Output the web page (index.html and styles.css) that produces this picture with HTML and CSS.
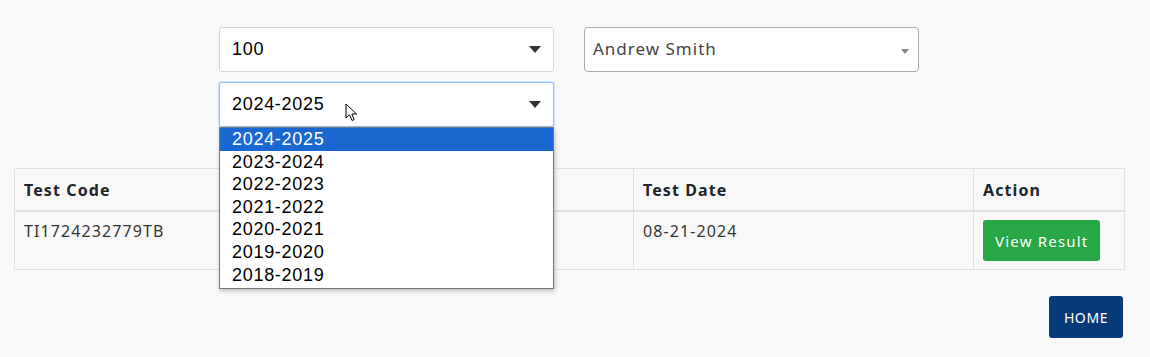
FILE: index.html
```html
<!DOCTYPE html>
<html>
<head>
  <title>Test Results</title>
  <link rel="stylesheet" href="styles.css">
</head>
<body>

  <div class="filters">
    <div class="filter-col">
      <div class="select-box">
        <span>100</span>
        <span class="caret"></span>
      </div>
      <div class="select-box focused">
        <span>2024-2025</span>
        <span class="caret"></span>
      </div>
    </div>
    <div class="filter-col">
      <div class="select2-box">
        <span>Andrew Smith</span>
        <span class="caret-small"></span>
      </div>
    </div>
  </div>

  <table class="results">
    <colgroup>
      <col style="width: 310px">
      <col style="width: 309px">
      <col style="width: 340px">
      <col style="width: 151px">
    </colgroup>
    <thead>
      <tr>
        <th>Test Code</th>
        <th>Test Name</th>
        <th>Test Date</th>
        <th>Action</th>
      </tr>
    </thead>
    <tbody>
      <tr>
        <td>TI1724232779TB</td>
        <td>Test</td>
        <td>08-21-2024</td>
        <td><button class="btn-result">View Result</button></td>
      </tr>
    </tbody>
  </table>

  <div class="footer">
    <button class="btn-home">HOME</button>
  </div>

  <!-- open list of the session select -->
  <ul class="dropdown">
    <li class="active">2024-2025</li>
    <li>2023-2024</li>
    <li>2022-2023</li>
    <li>2021-2022</li>
    <li>2020-2021</li>
    <li>2019-2020</li>
    <li>2018-2019</li>
  </ul>

  <svg class="cursor" width="13" height="20" viewBox="0 0 13 20">
    <path d="M1 1 L1 15 L4.5 11.8 L7 17.5 L9.2 16.5 L6.8 11 L11.5 11 Z" fill="#fff" stroke="#000" stroke-width="1"/>
  </svg>

</body>
</html>
```

FILE: styles.css
```css
body {
  margin: 0;
  background: #f8f8f8;
  font-family: "Noto Sans", sans-serif;
  color: #212529;
}
.filters {
  display: flex;
  gap: 30px;
  padding: 27px 0 0 219px;
}
.filter-col {
  display: flex;
  flex-direction: column;
  gap: 10px;
  width: 335px;
}
.select-box {
  display: flex;
  align-items: center;
  justify-content: space-between;
  box-sizing: border-box;
  height: 45px;
  padding: 0 12px 0 12px;
  background: #fff;
  border: 1px solid #d6d6d6;
  border-radius: 3px;
  font-family: "Liberation Sans", sans-serif;
  font-size: 18px;
  letter-spacing: 0.7px;
  color: #000;
}
.select-box.focused {
  border-color: #8fc0f5;
  box-shadow: 0 0 0 1px #cfe3fa;
}
.caret {
  width: 0;
  height: 0;
  border-left: 6px solid transparent;
  border-right: 6px solid transparent;
  border-top: 7px solid #333;
}
.select2-box {
  display: flex;
  align-items: center;
  justify-content: space-between;
  box-sizing: border-box;
  height: 45px;
  padding: 0 9px 2px 8px;
  background: #fff;
  border: 1px solid #aaa;
  border-radius: 4px;
  font-size: 17px;
  letter-spacing: 1px;
  color: #444;
}
.caret-small {
  width: 0;
  height: 0;
  margin-top: 5px;
  border-left: 4px solid transparent;
  border-right: 4px solid transparent;
  border-top: 5px solid #888;
}
.results {
  width: 1110px;
  margin: 41px 0 0 14px;
  border-collapse: collapse;
  table-layout: fixed;
  font-size: 16px;
  letter-spacing: 1.1px;
}
.results th,
.results td {
  border: 1px solid #dee2e6;
  padding: 8px 9px;
  text-align: left;
  vertical-align: top;
}
.results th {
  height: 25px;
  vertical-align: middle;
  font-weight: 700;
  border-bottom: 2px solid #dee2e6;
  color: #212529;
}
.results td {
  color: #333;
}
.btn-result {
  display: block;
  background: #28a745;
  color: #fff;
  border: none;
  border-radius: 3px;
  padding: 0 12px;
  height: 41px;
  font-family: "Noto Sans", sans-serif;
  font-size: 15px;
  letter-spacing: 1.2px;
}
.footer {
  display: flex;
  justify-content: flex-end;
  padding: 26px 27px 0 0;
}
.btn-home {
  background: #063a79;
  color: #fff;
  border: none;
  border-radius: 3px;
  width: 74px;
  height: 42px;
  font-family: "Noto Sans", sans-serif;
  font-size: 14px;
  letter-spacing: 0.6px;
}
.dropdown {
  position: absolute;
  left: 219px;
  top: 127px;
  width: 335px;
  box-sizing: border-box;
  margin: 0;
  padding: 0 0 2px;
  list-style: none;
  background: #fff;
  border: 1px solid #767676;
  box-shadow: 1px 2px 4px rgba(0, 0, 0, 0.25);
  font-family: "Liberation Sans", sans-serif;
  font-size: 18px;
  letter-spacing: 0.7px;
  color: #000;
}
.dropdown li {
  height: 22.6px;
  line-height: 22px;
  padding-left: 12px;
}
.dropdown li.active {
  background: #1a67d2;
  color: #fff;
}
.cursor {
  position: absolute;
  left: 345px;
  top: 103px;
}
```
